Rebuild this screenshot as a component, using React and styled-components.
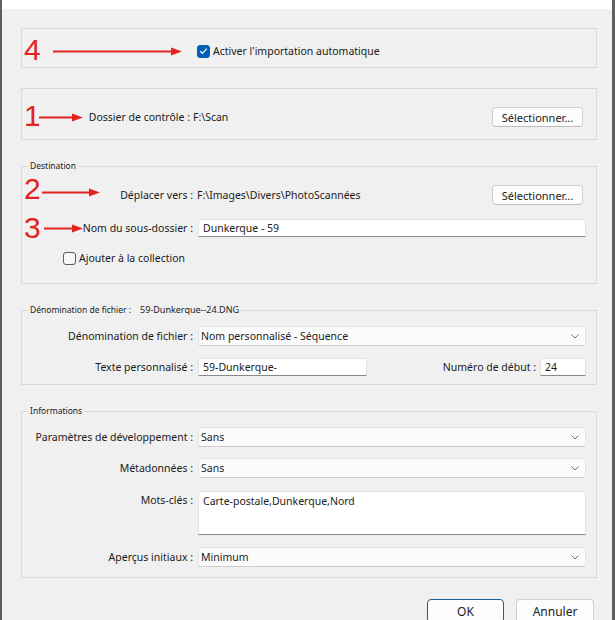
import React from 'react'
import styled, { createGlobalStyle } from 'styled-components'

const GlobalStyle = createGlobalStyle`
    html, body {
        margin: 0;
        padding: 0;
        overflow: hidden;
        background: #f0f0f0;
    }

    body {
        font-family: "Noto Sans", "Open Sans", sans-serif;
        font-size: 10.5px;
        color: #1b1b1b;
    }
`

const Window = styled.div`
    width: 615px;
    height: 620px;
    box-sizing: border-box;
    overflow: hidden;
    display: flex;
    flex-direction: column;
    background: #f0f0f0;
    border-left: 2px solid #5f5f5f;
    border-right: 3px solid #5f5f5f;
`

const TitleStrip = styled.div`
    flex: none;
    height: 9px;
    background: #fff;
`

const Content = styled.div`
    display: flex;
    flex-direction: column;
    gap: 20px;
    padding: 19px 15px 0 19px;
`

const Group = styled.div`
    position: relative;
    border: 1px solid #d9d9d9;
    padding: ${p => p.$pad};
`

const Fieldset = styled.fieldset`
    position: relative;
    margin: 0;
    min-width: 0;
    border: 1px solid #d9d9d9;
    padding: ${p => p.$pad};
`

const Legend = styled.legend`
    margin-left: 6px;
    padding: 0 2px;
    line-height: 12px;
    font-size: 8.5px;
    color: #1b1b1b;
`

const LegendValue = styled.span`
    margin-left: 9px;
    font-size: 9px;
`

const Row = styled.div`
    position: relative;
    display: grid;
    grid-template-columns: ${p => p.$label ?? 171}px 1fr ${p => p.$action ? 'auto' : ''};
    column-gap: ${p => p.$gap ?? 5}px;
    align-items: ${p => p.$top ? 'start' : 'center'};
    height: ${p => p.$h}px;
    margin-top: ${p => p.$mt ?? 0}px;
    padding-right: 10px;
`

const Label = styled.span`
    padding-top: ${p => p.$top ? 2 : 0}px;
    text-align: right;
    white-space: nowrap;
`

const Value = styled.span`
    white-space: nowrap;
`

const Button = styled.button`
    box-sizing: border-box;
    width: ${p => p.$w ?? 91}px;
    height: ${p => p.$h ?? 20}px;
    margin-right: ${p => p.$mr ?? 3}px;
    padding: 0;
    font-family: inherit;
    font-size: ${p => p.$fs ?? 11}px;
    color: #1b1b1b;
    background: #fdfdfd;
    border: 1px solid ${p => p.$primary ? '#1d5d99' : '#d0d0d0'};
    border-bottom-color: ${p => p.$primary ? '#1d5d99' : '#bdbdbd'};
    border-radius: 4px;
`

const TextBox = styled.div`
    box-sizing: border-box;
    width: ${p => p.$w ? `${p.$w}px` : '100%'};
    height: ${p => p.$h ?? 18}px;
    display: flex;
    align-items: ${p => p.$top ? 'flex-start' : 'center'};
    padding: ${p => p.$top ? '2px 4px' : '0 4px'};
    background: #fff;
    border: 1px solid #e3e3e3;
    border-bottom-color: #8a8a8a;
    white-space: nowrap;
`

const Select = styled.div`
    box-sizing: border-box;
    width: 100%;
    height: 20px;
    display: flex;
    align-items: center;
    justify-content: space-between;
    padding: 0 6px 0 2px;
    background: #fbfbfb;
    border: 1px solid #e4e4e4;
    border-bottom-color: #cdcdcd;
    border-radius: 2px;
`

const Split = styled.div`
    display: flex;
    align-items: center;
`

const SplitLabel = styled.span`
    margin-left: auto;
    margin-right: 4px;
    white-space: nowrap;
`

const CheckField = styled.label`
    display: flex;
    align-items: center;
    gap: 3px;
    padding-left: ${p => p.$indent ?? 0}px;
    white-space: nowrap;
`

const Box = styled.span`
    box-sizing: border-box;
    width: 13px;
    height: 13px;
    display: inline-flex;
    align-items: center;
    justify-content: center;
    border-radius: 3px;
    border: 1px solid ${p => p.$on ? '#005fb8' : '#5d5d5d'};
    background: ${p => p.$on ? '#005fb8' : '#f7f7f7'};
`

const Marker = styled.span`
    position: absolute;
    left: 2px;
    top: calc(50% + ${p => p.$dy ?? 0}px);
    transform: translateY(-50%);
    display: flex;
    align-items: center;
    pointer-events: none;
`

const MarkerDigit = styled.span`
    width: 17px;
    font-family: "Liberation Sans", Arial, sans-serif;
    font-size: 30px;
    line-height: 1;
    color: #e2231f;
`

const ArrowSvg = styled.svg`
    flex: none;
    margin-left: ${p => p.$ml}px;
    transform: translateY(${p => p.$dy ?? 0}px);
`

const Footer = styled.div`
    display: flex;
    justify-content: flex-end;
    gap: 12px;
    margin-top: 1px;
`

const Arrow = ({ from, to, dy }) => {
    const w = to - from
    return (
        <ArrowSvg width={w} height={9} viewBox={`0 0 ${w} 9`} $ml={from - 41} $dy={dy}>
            <line x1="0" y1="4.5" x2={w - 9} y2="4.5" stroke="#e2231f" strokeWidth="2" />
            <polygon points={`${w - 11},0.5 ${w},4.5 ${w - 11},8.5`} fill="#e2231f" />
        </ArrowSvg>
    )
}

const Annotation = ({ n, from, to, dy, arrowDy }) => (
    <Marker $dy={dy}>
        <MarkerDigit>{n}</MarkerDigit>
        <Arrow from={from} to={to} dy={arrowDy} />
    </Marker>
)

const Checkbox = ({ checked, children, indent }) => (
    <CheckField $indent={indent}>
        <Box $on={checked}>
            {checked && (
                <svg width="9" height="8" viewBox="0 0 9 8">
                    <polyline points="1.2,4.2 3.4,6.3 7.8,1.6" fill="none" stroke="#fff" strokeWidth="1.2" />
                </svg>
            )}
        </Box>
        <span>{children}</span>
    </CheckField>
)

const Dropdown = ({ children }) => (
    <Select>
        <span>{children}</span>
        <svg width="8" height="5" viewBox="0 0 8 5">
            <polyline points="0.5,0.5 4,4 7.5,0.5" fill="none" stroke="#707070" strokeWidth="1" />
        </svg>
    </Select>
)

const App = () => {
    return (
        <Window>
            <GlobalStyle />
            <TitleStrip />
            <Content>
                <Group $pad="15px 0 10px 0">
                    <Row $h={13} $label={170}>
                        <Annotation n="4" from={53} to={182} dy={-1} arrowDy={2} />
                        <span />
                        <Checkbox checked>Activer l'importation automatique</Checkbox>
                    </Row>
                </Group>

                <Group $pad="18px 0 12px 0">
                    <Row $h={20} $label={168} $gap={3} $action>
                        <Annotation n="1" from={39} to={83} dy={-1} arrowDy={1} />
                        <Label>Dossier de contrôle :</Label>
                        <Value>F:\Scan</Value>
                        <Button>Sélectionner...</Button>
                    </Row>
                </Group>

                <Fieldset $pad="13px 0 18px 0">
                    <Legend>Destination</Legend>
                    <Row $h={20} $gap={4} $action>
                        <Annotation n="2" from={42} to={100} dy={-6} arrowDy={3} />
                        <Label>Déplacer vers :</Label>
                        <Value>F:\Images\Divers\PhotoScannées</Value>
                        <Button>Sélectionner...</Button>
                    </Row>
                    <Row $h={18} $mt={14}>
                        <Annotation n="3" from={44} to={83} />
                        <Label>Nom du sous-dossier :</Label>
                        <TextBox>Dunkerque - 59</TextBox>
                    </Row>
                    <Row $h={14} $mt={14} $label={0} $gap={0}>
                        <span />
                        <Checkbox indent={41}>Ajouter à la collection</Checkbox>
                    </Row>
                </Fieldset>

                <Fieldset $pad="10px 0 8px 0">
                    <Legend>
                        Dénomination de fichier :
                        <LegendValue>59-Dunkerque--24.DNG</LegendValue>
                    </Legend>
                    <Row $h={20}>
                        <Label>Dénomination de fichier :</Label>
                        <Dropdown>Nom personnalisé - Séquence</Dropdown>
                    </Row>
                    <Row $h={18} $mt={12}>
                        <Label>Texte personnalisé :</Label>
                        <Split>
                            <TextBox $w={169}>59-Dunkerque-</TextBox>
                            <SplitLabel>Numéro de début :</SplitLabel>
                            <TextBox $w={46}>24</TextBox>
                        </Split>
                    </Row>
                </Fieldset>

                <Fieldset $pad="10px 0 10px 0">
                    <Legend>Informations</Legend>
                    <Row $h={20}>
                        <Label>Paramètres de développement :</Label>
                        <Dropdown>Sans</Dropdown>
                    </Row>
                    <Row $h={20} $mt={11}>
                        <Label>Métadonnées :</Label>
                        <Dropdown>Sans</Dropdown>
                    </Row>
                    <Row $h={44} $mt={13} $top>
                        <Label $top>Mots-clés :</Label>
                        <TextBox $h={44} $top>Carte-postale,Dunkerque,Nord</TextBox>
                    </Row>
                    <Row $h={20} $mt={12}>
                        <Label>Aperçus initiaux :</Label>
                        <Dropdown>Minimum</Dropdown>
                    </Row>
                </Fieldset>

                <Footer>
                    <Button $w={77} $h={24} $mr={0} $fs={12} $primary>OK</Button>
                    <Button $w={78} $h={24} $mr={3} $fs={12}>Annuler</Button>
                </Footer>
            </Content>
        </Window>
    )
}

export default App
